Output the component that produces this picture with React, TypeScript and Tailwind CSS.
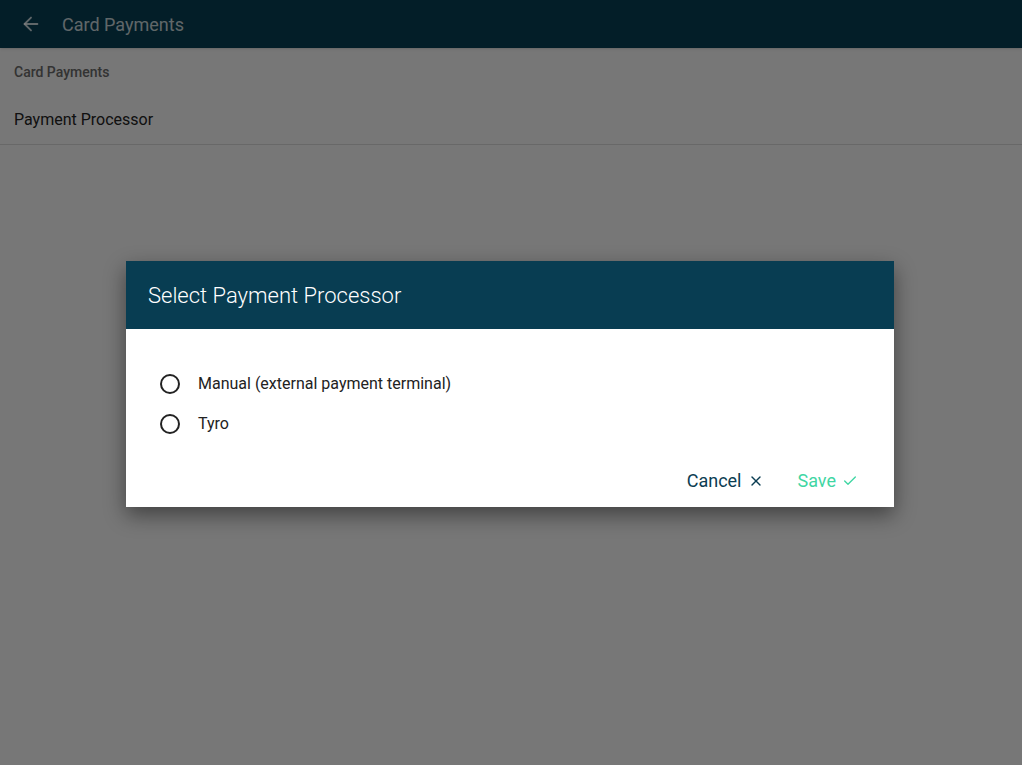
import React from 'react';
import { ArrowLeft, Check, X } from 'lucide-react';

const options = ['Manual (external payment terminal)', 'Tyro'];

const App: React.FC = () => {
  return (
    <div className="relative w-[1022px] h-[765px] overflow-hidden bg-[#eeeeee] font-['Roboto',sans-serif]">
      <div className="h-12 bg-[#063c50] flex items-center px-5 shadow">
        <ArrowLeft size={22} className="text-white/75" />
        <span className="ml-[20px] text-[18px] text-white/75">Card Payments</span>
      </div>
      <div className="border-b border-[#d0d0d0]">
        <div className="px-[14px] pt-[14px] text-[14px] font-medium text-[#666]">Card Payments</div>
        <div className="px-[14px] pt-[25px] pb-[12px] text-[16px] text-[#222]">Payment Processor</div>
      </div>

      <div className="absolute inset-0 bg-black/50 flex items-start pt-[261px] pl-[126px]">
        <div className="w-[768px] bg-white shadow-[0_8px_20px_rgba(0,0,0,0.45)]">
          <div className="h-[68px] bg-[#083d52] flex items-center px-[22px]">
            <h2 className="text-[22px] font-light text-white">Select Payment Processor</h2>
          </div>
          <div className="pt-[45px] px-[34px] space-y-[20px]">
            {options.map(opt => (
              <label key={opt} className="flex items-center h-[20px]">
                <span className="w-[20px] h-[20px] rounded-full border-2 border-[#222]" />
                <span className="ml-[18px] text-[16px] text-[#222]">{opt}</span>
              </label>
            ))}
          </div>
          <div className="flex justify-end items-center pt-[33px] pb-[13px] pr-[36px]">
            <button className="flex items-center text-[18px] text-[#0b3d52]">
              Cancel
              <X size={16} className="ml-[6px]" />
            </button>
            <button className="ml-[34px] flex items-center text-[18px] text-[#3fd6a3]">
              Save
              <Check size={16} className="ml-[6px]" />
            </button>
          </div>
        </div>
      </div>
    </div>
  );
};

export default App;
